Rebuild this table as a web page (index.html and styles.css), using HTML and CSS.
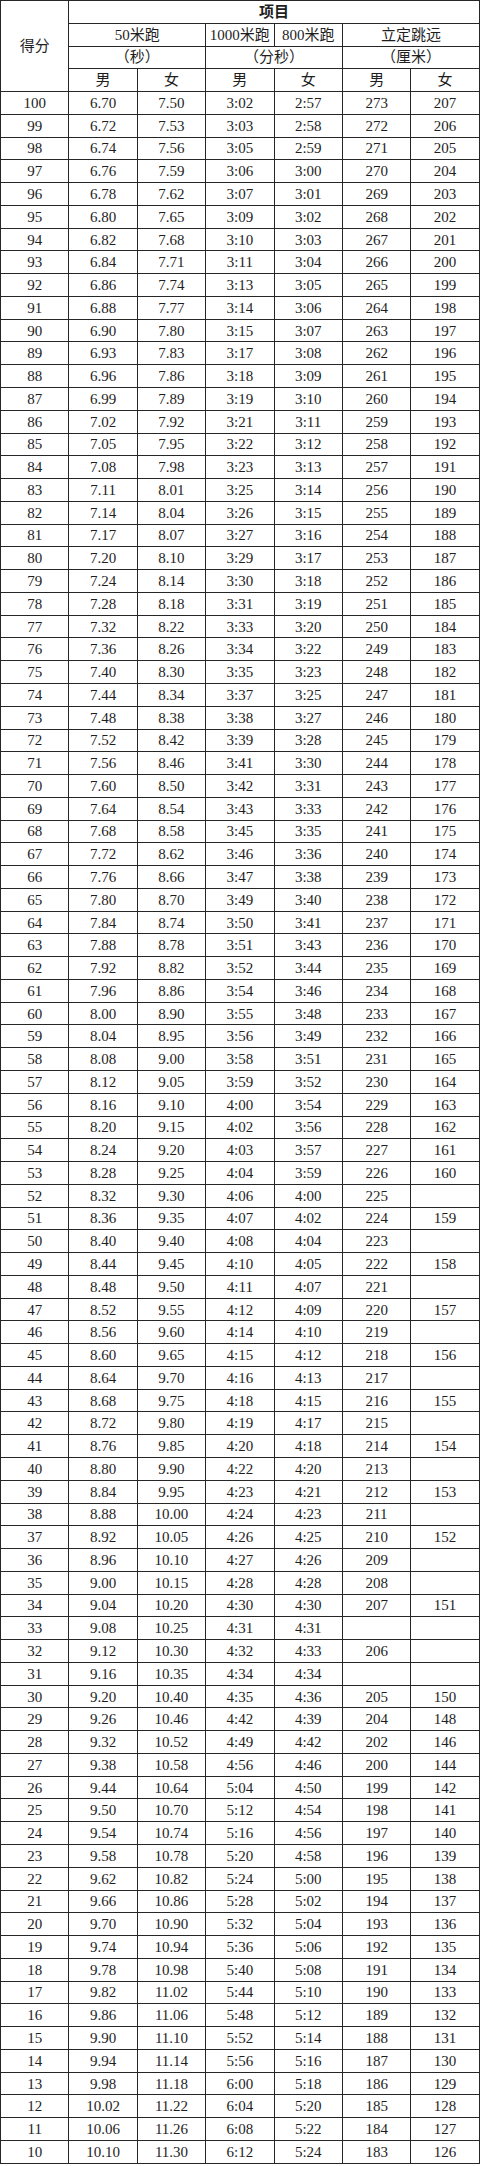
FILE: index.html
```html
<!DOCTYPE html>
<html lang="zh-CN">
<head>
<meta charset="utf-8">
<title>评分表</title>
<link rel="stylesheet" href="styles.css">
</head>
<body>
<table class="score-table">
<colgroup><col><col><col><col><col><col><col></colgroup>
<thead>
<tr><th rowspan="4" class="h-score">得分</th><th colspan="6" class="h-item">项目</th></tr>
<tr><th colspan="2">50米跑</th><th>1000米跑</th><th>800米跑</th><th colspan="2">立定跳远</th></tr>
<tr><th colspan="2">（秒）</th><th colspan="2">（分秒）</th><th colspan="2">（厘米）</th></tr>
<tr><th>男</th><th>女</th><th>男</th><th>女</th><th>男</th><th>女</th></tr>
</thead>
<tbody>
<tr><td>100</td><td>6.70</td><td>7.50</td><td>3:02</td><td>2:57</td><td>273</td><td>207</td></tr>
<tr><td>99</td><td>6.72</td><td>7.53</td><td>3:03</td><td>2:58</td><td>272</td><td>206</td></tr>
<tr><td>98</td><td>6.74</td><td>7.56</td><td>3:05</td><td>2:59</td><td>271</td><td>205</td></tr>
<tr><td>97</td><td>6.76</td><td>7.59</td><td>3:06</td><td>3:00</td><td>270</td><td>204</td></tr>
<tr><td>96</td><td>6.78</td><td>7.62</td><td>3:07</td><td>3:01</td><td>269</td><td>203</td></tr>
<tr><td>95</td><td>6.80</td><td>7.65</td><td>3:09</td><td>3:02</td><td>268</td><td>202</td></tr>
<tr><td>94</td><td>6.82</td><td>7.68</td><td>3:10</td><td>3:03</td><td>267</td><td>201</td></tr>
<tr><td>93</td><td>6.84</td><td>7.71</td><td>3:11</td><td>3:04</td><td>266</td><td>200</td></tr>
<tr><td>92</td><td>6.86</td><td>7.74</td><td>3:13</td><td>3:05</td><td>265</td><td>199</td></tr>
<tr><td>91</td><td>6.88</td><td>7.77</td><td>3:14</td><td>3:06</td><td>264</td><td>198</td></tr>
<tr><td>90</td><td>6.90</td><td>7.80</td><td>3:15</td><td>3:07</td><td>263</td><td>197</td></tr>
<tr><td>89</td><td>6.93</td><td>7.83</td><td>3:17</td><td>3:08</td><td>262</td><td>196</td></tr>
<tr><td>88</td><td>6.96</td><td>7.86</td><td>3:18</td><td>3:09</td><td>261</td><td>195</td></tr>
<tr><td>87</td><td>6.99</td><td>7.89</td><td>3:19</td><td>3:10</td><td>260</td><td>194</td></tr>
<tr><td>86</td><td>7.02</td><td>7.92</td><td>3:21</td><td>3:11</td><td>259</td><td>193</td></tr>
<tr><td>85</td><td>7.05</td><td>7.95</td><td>3:22</td><td>3:12</td><td>258</td><td>192</td></tr>
<tr><td>84</td><td>7.08</td><td>7.98</td><td>3:23</td><td>3:13</td><td>257</td><td>191</td></tr>
<tr><td>83</td><td>7.11</td><td>8.01</td><td>3:25</td><td>3:14</td><td>256</td><td>190</td></tr>
<tr><td>82</td><td>7.14</td><td>8.04</td><td>3:26</td><td>3:15</td><td>255</td><td>189</td></tr>
<tr><td>81</td><td>7.17</td><td>8.07</td><td>3:27</td><td>3:16</td><td>254</td><td>188</td></tr>
<tr><td>80</td><td>7.20</td><td>8.10</td><td>3:29</td><td>3:17</td><td>253</td><td>187</td></tr>
<tr><td>79</td><td>7.24</td><td>8.14</td><td>3:30</td><td>3:18</td><td>252</td><td>186</td></tr>
<tr><td>78</td><td>7.28</td><td>8.18</td><td>3:31</td><td>3:19</td><td>251</td><td>185</td></tr>
<tr><td>77</td><td>7.32</td><td>8.22</td><td>3:33</td><td>3:20</td><td>250</td><td>184</td></tr>
<tr><td>76</td><td>7.36</td><td>8.26</td><td>3:34</td><td>3:22</td><td>249</td><td>183</td></tr>
<tr><td>75</td><td>7.40</td><td>8.30</td><td>3:35</td><td>3:23</td><td>248</td><td>182</td></tr>
<tr><td>74</td><td>7.44</td><td>8.34</td><td>3:37</td><td>3:25</td><td>247</td><td>181</td></tr>
<tr><td>73</td><td>7.48</td><td>8.38</td><td>3:38</td><td>3:27</td><td>246</td><td>180</td></tr>
<tr><td>72</td><td>7.52</td><td>8.42</td><td>3:39</td><td>3:28</td><td>245</td><td>179</td></tr>
<tr><td>71</td><td>7.56</td><td>8.46</td><td>3:41</td><td>3:30</td><td>244</td><td>178</td></tr>
<tr><td>70</td><td>7.60</td><td>8.50</td><td>3:42</td><td>3:31</td><td>243</td><td>177</td></tr>
<tr><td>69</td><td>7.64</td><td>8.54</td><td>3:43</td><td>3:33</td><td>242</td><td>176</td></tr>
<tr><td>68</td><td>7.68</td><td>8.58</td><td>3:45</td><td>3:35</td><td>241</td><td>175</td></tr>
<tr><td>67</td><td>7.72</td><td>8.62</td><td>3:46</td><td>3:36</td><td>240</td><td>174</td></tr>
<tr><td>66</td><td>7.76</td><td>8.66</td><td>3:47</td><td>3:38</td><td>239</td><td>173</td></tr>
<tr><td>65</td><td>7.80</td><td>8.70</td><td>3:49</td><td>3:40</td><td>238</td><td>172</td></tr>
<tr><td>64</td><td>7.84</td><td>8.74</td><td>3:50</td><td>3:41</td><td>237</td><td>171</td></tr>
<tr><td>63</td><td>7.88</td><td>8.78</td><td>3:51</td><td>3:43</td><td>236</td><td>170</td></tr>
<tr><td>62</td><td>7.92</td><td>8.82</td><td>3:52</td><td>3:44</td><td>235</td><td>169</td></tr>
<tr><td>61</td><td>7.96</td><td>8.86</td><td>3:54</td><td>3:46</td><td>234</td><td>168</td></tr>
<tr><td>60</td><td>8.00</td><td>8.90</td><td>3:55</td><td>3:48</td><td>233</td><td>167</td></tr>
<tr><td>59</td><td>8.04</td><td>8.95</td><td>3:56</td><td>3:49</td><td>232</td><td>166</td></tr>
<tr><td>58</td><td>8.08</td><td>9.00</td><td>3:58</td><td>3:51</td><td>231</td><td>165</td></tr>
<tr><td>57</td><td>8.12</td><td>9.05</td><td>3:59</td><td>3:52</td><td>230</td><td>164</td></tr>
<tr><td>56</td><td>8.16</td><td>9.10</td><td>4:00</td><td>3:54</td><td>229</td><td>163</td></tr>
<tr><td>55</td><td>8.20</td><td>9.15</td><td>4:02</td><td>3:56</td><td>228</td><td>162</td></tr>
<tr><td>54</td><td>8.24</td><td>9.20</td><td>4:03</td><td>3:57</td><td>227</td><td>161</td></tr>
<tr><td>53</td><td>8.28</td><td>9.25</td><td>4:04</td><td>3:59</td><td>226</td><td>160</td></tr>
<tr><td>52</td><td>8.32</td><td>9.30</td><td>4:06</td><td>4:00</td><td>225</td><td></td></tr>
<tr><td>51</td><td>8.36</td><td>9.35</td><td>4:07</td><td>4:02</td><td>224</td><td>159</td></tr>
<tr><td>50</td><td>8.40</td><td>9.40</td><td>4:08</td><td>4:04</td><td>223</td><td></td></tr>
<tr><td>49</td><td>8.44</td><td>9.45</td><td>4:10</td><td>4:05</td><td>222</td><td>158</td></tr>
<tr><td>48</td><td>8.48</td><td>9.50</td><td>4:11</td><td>4:07</td><td>221</td><td></td></tr>
<tr><td>47</td><td>8.52</td><td>9.55</td><td>4:12</td><td>4:09</td><td>220</td><td>157</td></tr>
<tr><td>46</td><td>8.56</td><td>9.60</td><td>4:14</td><td>4:10</td><td>219</td><td></td></tr>
<tr><td>45</td><td>8.60</td><td>9.65</td><td>4:15</td><td>4:12</td><td>218</td><td>156</td></tr>
<tr><td>44</td><td>8.64</td><td>9.70</td><td>4:16</td><td>4:13</td><td>217</td><td></td></tr>
<tr><td>43</td><td>8.68</td><td>9.75</td><td>4:18</td><td>4:15</td><td>216</td><td>155</td></tr>
<tr><td>42</td><td>8.72</td><td>9.80</td><td>4:19</td><td>4:17</td><td>215</td><td></td></tr>
<tr><td>41</td><td>8.76</td><td>9.85</td><td>4:20</td><td>4:18</td><td>214</td><td>154</td></tr>
<tr><td>40</td><td>8.80</td><td>9.90</td><td>4:22</td><td>4:20</td><td>213</td><td></td></tr>
<tr><td>39</td><td>8.84</td><td>9.95</td><td>4:23</td><td>4:21</td><td>212</td><td>153</td></tr>
<tr><td>38</td><td>8.88</td><td>10.00</td><td>4:24</td><td>4:23</td><td>211</td><td></td></tr>
<tr><td>37</td><td>8.92</td><td>10.05</td><td>4:26</td><td>4:25</td><td>210</td><td>152</td></tr>
<tr><td>36</td><td>8.96</td><td>10.10</td><td>4:27</td><td>4:26</td><td>209</td><td></td></tr>
<tr><td>35</td><td>9.00</td><td>10.15</td><td>4:28</td><td>4:28</td><td>208</td><td></td></tr>
<tr><td>34</td><td>9.04</td><td>10.20</td><td>4:30</td><td>4:30</td><td>207</td><td>151</td></tr>
<tr><td>33</td><td>9.08</td><td>10.25</td><td>4:31</td><td>4:31</td><td></td><td></td></tr>
<tr><td>32</td><td>9.12</td><td>10.30</td><td>4:32</td><td>4:33</td><td>206</td><td></td></tr>
<tr><td>31</td><td>9.16</td><td>10.35</td><td>4:34</td><td>4:34</td><td></td><td></td></tr>
<tr><td>30</td><td>9.20</td><td>10.40</td><td>4:35</td><td>4:36</td><td>205</td><td>150</td></tr>
<tr><td>29</td><td>9.26</td><td>10.46</td><td>4:42</td><td>4:39</td><td>204</td><td>148</td></tr>
<tr><td>28</td><td>9.32</td><td>10.52</td><td>4:49</td><td>4:42</td><td>202</td><td>146</td></tr>
<tr><td>27</td><td>9.38</td><td>10.58</td><td>4:56</td><td>4:46</td><td>200</td><td>144</td></tr>
<tr><td>26</td><td>9.44</td><td>10.64</td><td>5:04</td><td>4:50</td><td>199</td><td>142</td></tr>
<tr><td>25</td><td>9.50</td><td>10.70</td><td>5:12</td><td>4:54</td><td>198</td><td>141</td></tr>
<tr><td>24</td><td>9.54</td><td>10.74</td><td>5:16</td><td>4:56</td><td>197</td><td>140</td></tr>
<tr><td>23</td><td>9.58</td><td>10.78</td><td>5:20</td><td>4:58</td><td>196</td><td>139</td></tr>
<tr><td>22</td><td>9.62</td><td>10.82</td><td>5:24</td><td>5:00</td><td>195</td><td>138</td></tr>
<tr><td>21</td><td>9.66</td><td>10.86</td><td>5:28</td><td>5:02</td><td>194</td><td>137</td></tr>
<tr><td>20</td><td>9.70</td><td>10.90</td><td>5:32</td><td>5:04</td><td>193</td><td>136</td></tr>
<tr><td>19</td><td>9.74</td><td>10.94</td><td>5:36</td><td>5:06</td><td>192</td><td>135</td></tr>
<tr><td>18</td><td>9.78</td><td>10.98</td><td>5:40</td><td>5:08</td><td>191</td><td>134</td></tr>
<tr><td>17</td><td>9.82</td><td>11.02</td><td>5:44</td><td>5:10</td><td>190</td><td>133</td></tr>
<tr><td>16</td><td>9.86</td><td>11.06</td><td>5:48</td><td>5:12</td><td>189</td><td>132</td></tr>
<tr><td>15</td><td>9.90</td><td>11.10</td><td>5:52</td><td>5:14</td><td>188</td><td>131</td></tr>
<tr><td>14</td><td>9.94</td><td>11.14</td><td>5:56</td><td>5:16</td><td>187</td><td>130</td></tr>
<tr><td>13</td><td>9.98</td><td>11.18</td><td>6:00</td><td>5:18</td><td>186</td><td>129</td></tr>
<tr><td>12</td><td>10.02</td><td>11.22</td><td>6:04</td><td>5:20</td><td>185</td><td>128</td></tr>
<tr><td>11</td><td>10.06</td><td>11.26</td><td>6:08</td><td>5:22</td><td>184</td><td>127</td></tr>
<tr><td>10</td><td>10.10</td><td>11.30</td><td>6:12</td><td>5:24</td><td>183</td><td>126</td></tr>
</tbody>
</table>
</body>
</html>
```

FILE: styles.css
```css
html, body {
  margin: 0;
  padding: 0;
  background: #ffffff;
}

.score-table {
  width: 479px;
  table-layout: fixed;
  border-collapse: collapse;
  font-family: "Liberation Serif", "Noto Sans CJK SC", serif;
  font-size: 15px;
  color: #1e1e1e;
}

.score-table col {
  width: 68.4px;
}

.score-table tr {
  height: 22.78px;
}

.score-table th,
.score-table td {
  border: 1px solid #262626;
  padding: 0;
  text-align: center;
  vertical-align: middle;
  font-weight: normal;
  line-height: 20px;
  white-space: nowrap;
  overflow: hidden;
}

.score-table .h-item {
  font-weight: bold;
}

.score-table .h-score {
  font-size: 15px;
}
```
